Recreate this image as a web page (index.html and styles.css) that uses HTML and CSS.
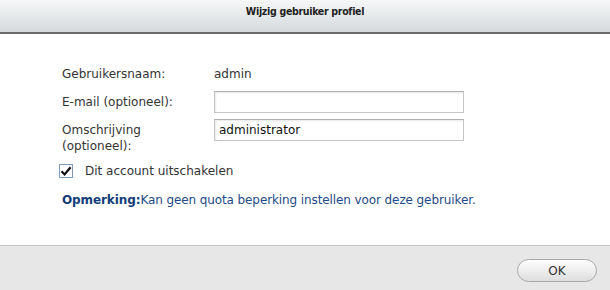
FILE: index.html
```html
<!DOCTYPE html>
<html lang="nl">
<head>
  <meta charset="UTF-8">
  <title>Wijzig gebruiker profiel</title>
  <link rel="stylesheet" href="styles.css">
</head>
<body>
<div class="dialog">
  <div class="head">Wijzig gebruiker profiel</div>

  <div class="content">
    <div class="form">
      <div class="label">Gebruikersnaam:</div>
      <div class="value">admin</div>

      <div class="label">E-mail (optioneel):</div>
      <div class="field"><input type="text" value=""></div>

      <div class="label">Omschrijving<br>(optioneel):</div>
      <div class="field"><input type="text" value="administrator"></div>
    </div>

    <label class="check">
      <span class="box">
        <svg width="12" height="12" viewBox="0 0 12 12">
          <path d="M1.5 6.2 L4.6 9.4 L10.6 2.2" fill="none" stroke="#111" stroke-width="2.2"/>
        </svg>
      </span>
      Dit account uitschakelen
    </label>

    <p class="note"><b>Opmerking:</b>Kan geen quota beperking instellen voor deze gebruiker.</p>
  </div>

  <div class="foot">
    <button class="btn">OK</button>
  </div>
</div>
</body>
</html>
```

FILE: styles.css
```css
* {
  margin: 0;
  padding: 0;
  box-sizing: border-box;
}

body {
  width: 610px;
  height: 290px;
  overflow: hidden;
  background: #fff;
  font-family: "DejaVu Sans", Verdana, sans-serif;
  font-size: 12px;
  color: #333;
}

.dialog {
  display: flex;
  flex-direction: column;
  height: 290px;
}

.head {
  height: 34px;
  padding-top: 5px;
  text-align: center;
  font-family: "DejaVu Sans Condensed", Tahoma, sans-serif;
  font-weight: bold;
  font-size: 10.5px;
  letter-spacing: -0.3px;
  color: #222;
  background: linear-gradient(#f6f8f8, #d5d9dc);
  border-bottom: 2px solid #6a6a6a;
}

.content {
  flex: 1;
  padding: 29px 0 0 62px;
}

.form {
  display: grid;
  grid-template-columns: 152px 250px;
  row-gap: 6px;
}

.label,
.value {
  line-height: 16px;
  padding-top: 3px;
}

.value {
  height: 22px;
}

.field input {
  width: 250px;
  height: 22px;
  border: 1px solid #c6c6c6;
  border-top-color: #b0b0b0;
  box-shadow: inset 1px 1px 2px #e8e8e8;
  padding: 0 4px;
  font-family: "DejaVu Sans", Verdana, sans-serif;
  font-size: 12px;
  color: #111;
  outline: none;
}

.check {
  display: flex;
  align-items: center;
  gap: 12px;
  margin: 9px 0 0 -3px;
  line-height: 16px;
  color: #333;
}

.check .box {
  display: flex;
  align-items: center;
  justify-content: center;
  width: 14px;
  height: 14px;
  border: 1px solid #7d9bb8;
  background: #fff;
}

.note {
  margin-top: 13px;
  line-height: 16px;
  letter-spacing: -0.1px;
  color: #1d4a86;
}

.note b {
  color: #123d7a;
}

.foot {
  height: 45px;
  display: flex;
  justify-content: flex-end;
  padding: 13px 13px 0 0;
  background: #e7e7e7;
  border-top: 1px solid #c4c4c4;
}

.btn {
  width: 80px;
  height: 23px;
  border: 1px solid #a8a8a8;
  border-radius: 12px;
  background: linear-gradient(#fdfdfd, #dedede);
  font-family: "DejaVu Sans", Verdana, sans-serif;
  font-size: 12px;
  color: #333;
}
```
